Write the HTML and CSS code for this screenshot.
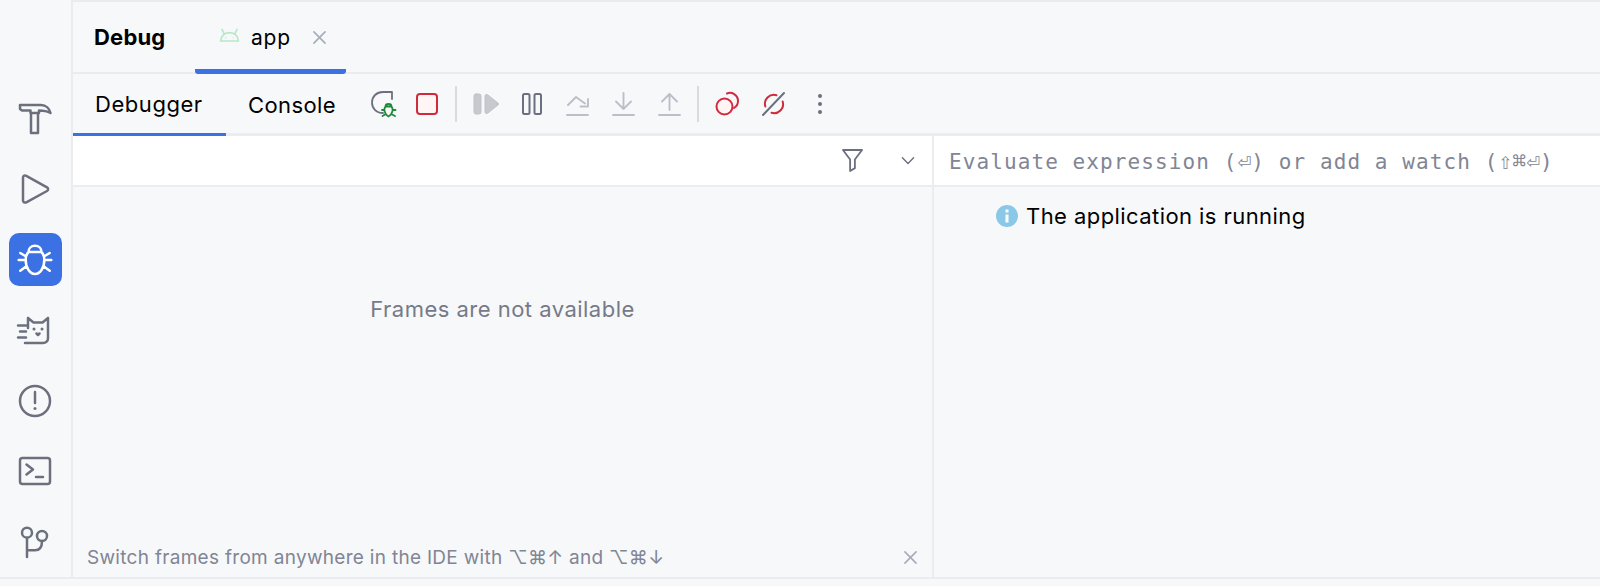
FILE: index.html
```html
<!DOCTYPE html>
<html lang="en">
<head>
<meta charset="utf-8">
<title>Debug</title>
<link rel="stylesheet" href="styles.css">
</head>
<body>
<div class="app">
  <nav class="rail">
    <span class="rail-btn"><svg viewBox="0 0 36 36" class="ico36"><path d="M3 4H24C29 4 32.500 7.500 33.500 12 30 10 27 9.500 22 9.500V12H13.500V9.500H5L3 8Z M14 12V32H21V12"/></svg></span>
    <span class="rail-btn"><svg viewBox="0 0 36 36" class="ico36"><path d="M6 6.500C6 4.800 7.800 4 9.300 4.800L30 16.300C31.500 17.300 31.500 19 30 20L9.300 31.300C7.800 32 6 31.300 6 29.500Z"/></svg></span>
    <span class="rail-btn active"><svg viewBox="0 0 36 36" class="ico36 white"><path d="M18 3.700C14 3.700 11.500 6.500 11.500 10 9.500 12 8.700 15 8.700 18 8.700 26 13 32 18 32S27.300 26 27.300 18C27.300 15 26.500 12 24.500 10 24.500 6.500 22 3.700 18 3.700Z M11.500 10H24.500 M1.700 18H8.700 M27.300 18H34.300 M3.300 11 8.700 14.300 M32.700 11 27.300 14.300 M3.300 28.700 8.700 24.700 M32.700 28.700 27.300 24.700"/></svg></span>
    <span class="rail-btn"><svg viewBox="0 0 36 36" class="ico36"><path d="M11 6V16 M31 6V26C31 29 29 31 26 31H8 M11 6 16.500 10.500H25.500L31 6 M1 13.500H9 M3 19.500H9 M1 25.500H9"/><circle cx="17" cy="17" r="1.500" class="fill"/><circle cx="25" cy="17" r="1.500" class="fill"/><path d="M19.500 21.500 21 23 22.500 21.500"/></svg></span>
    <span class="rail-btn"><svg viewBox="0 0 36 36" class="ico36"><circle cx="18" cy="18" r="15"/><path d="M18 9V20"/><circle cx="18" cy="25.500" r="1.500" class="fill"/></svg></span>
    <span class="rail-btn"><svg viewBox="0 0 36 36" class="ico36"><rect x="3" y="5" width="30" height="26" rx="2.500"/><path d="M9.500 11.500 16 16.500 9.500 21.500 M19 24H26"/></svg></span>
    <span class="rail-btn"><svg viewBox="0 0 36 36" class="ico36"><circle cx="10" cy="8.700" r="5"/><circle cx="25" cy="12" r="5"/><path d="M10 13.700V33 M10 26.300H18C22.500 26.300 25 23 25 17"/></svg></span>
  </nav>
  <main class="main">
    <header class="tabs">
      <strong class="title">Debug</strong>
      <div class="run-tab">
        <svg viewBox="0 0 22 16" class="android"><path d="M1.500 15C1.500 10 5.500 6 11 6S20.500 10 20.500 15Z M5.500 7.500 3 2.500 M16.500 7.500 19 2.500"/><circle cx="7" cy="11.500" r=".7"/><circle cx="15" cy="11.500" r=".7"/></svg>
        <span>app</span>
        <svg viewBox="0 0 14 14" class="close"><path d="M1 1 13 13M13 1 1 13"/></svg>
      </div>
    </header>
    <div class="toolbar">
      <div class="view-tab selected">Debugger</div>
      <div class="view-tab">Console</div>
      <div class="actions">
        <svg viewBox="0 0 26 26" class="tool t-rerun"><path class="grey" d="M12 22C5 22 1 17 1 11.500 1 5.500 5.500 1 12 1H21V8"/><path class="green" d="M14.500 15.500C14.500 14 16 13 17.500 13S20.500 14 20.500 15.500C22.500 17.500 22 23 17.500 25.500 13 23 12.500 17.500 14.500 15.500Z M14.500 15.500H20.500 M11 19H13.500 M21.500 19H24.500 M11.500 25 14 23.500 M24 25 21 23.500"/></svg>
        <svg viewBox="0 0 24 24" class="tool t-stop"><rect x="2" y="2" width="20" height="20" rx="3"/></svg>
        <i class="sep"></i>
        <svg viewBox="0 0 26 24" class="tool t-resume"><rect x="1" y="2" width="7" height="20" rx="2"/><path d="M12 4C12 2.500 13.500 2 14.500 2.700L25 11C25.700 11.600 25.700 12.400 25 13L14.500 21.300C13.500 22 12 21.500 12 20Z"/></svg>
        <svg viewBox="0 0 20 24" class="tool t-pause"><rect x="1" y="2" width="6.500" height="20" rx="1.500"/><rect x="12.500" y="2" width="6.500" height="20" rx="1.500"/></svg>
        <svg viewBox="0 0 22 24" class="tool t-step"><path d="M0 23H21 M1 13 9 5 18 11.500 M21 7V14.500H13.500"/></svg>
        <svg viewBox="0 0 22 24" class="tool t-step"><path d="M0 23H21 M10.500 1V17 M3 9.500 10.500 17 18 9.500"/></svg>
        <svg viewBox="0 0 22 24" class="tool t-step"><path d="M0 23H21 M10.500 18V2 M3 9.500 10.500 2 18 9.500"/></svg>
        <i class="sep"></i>
        <svg viewBox="0 0 24 24" class="tool t-red"><circle cx="9.500" cy="14.500" r="8"/><path d="M12 1.500C16.500 -.5 23 2.500 23 9 23 12 21.500 14.500 19 16"/></svg>
        <svg viewBox="0 0 24 24" class="tool t-red"><path d="M14.500 3.300A9 9 0 0 0 3.300 14.500 M9.500 20.700A9 9 0 0 0 20.700 9.500"/><path class="slash" d="M1 23 22 1"/></svg>
        <svg viewBox="0 0 6 22" class="tool t-more"><circle cx="3" cy="3" r="2"/><circle cx="3" cy="11" r="2"/><circle cx="3" cy="19" r="2"/></svg>
      </div>
    </div>
    <div class="panes">
      <section class="frames">
        <div class="frames-bar">
          <svg viewBox="0 0 22 24" class="filter"><path d="M1 1H21L13.500 11V20L8.500 23V11Z"/></svg>
          <svg viewBox="0 0 16 10" class="chev"><path d="M1 1 8 8 15 1"/></svg>
        </div>
        <div class="frames-body">
          <p class="empty">Frames are not available</p>
          <div class="hint">
            <span>Switch frames from anywhere in the IDE with ⌥⌘↑ and ⌥⌘↓</span>
            <svg viewBox="0 0 14 14" class="hint-close"><path d="M1 1 13 13M13 1 1 13"/></svg>
          </div>
        </div>
      </section>
      <section class="vars">
        <div class="eval"><span>Evaluate expression (<span class="key">⏎</span>) or add a watch (<span class="key">⇧⌘⏎</span>)</span></div>
        <div class="status">
          <svg viewBox="0 0 22 22" class="info"><circle cx="11" cy="11" r="11"/><rect x="9.500" y="9.500" width="3" height="8" /><rect x="9.500" y="4.500" width="3" height="3"/></svg>
          <span>The application is running</span>
        </div>
      </section>
    </div>
  </main>
</div>
</body>
</html>
```
FILE: styles.css
```css
* { box-sizing: border-box; }
html, body { margin: 0; height: 100%; }
body { background: #f7f8fa; font-family: Inter, "Liberation Sans", sans-serif; color: #000; overflow: hidden; }
svg { display: block; flex: none; fill: none; stroke-linecap: round; stroke-linejoin: round; overflow: visible; }

.app { display: flex; height: 586px; padding-bottom: 7px; }
.rail { width: 73px; flex: none; border-right: 2px solid #ebecf0; border-bottom: 2px solid #ebecf0; padding: 92px 1px 0 0; display: flex; flex-direction: column; align-items: center; gap: 17.500px; }
.rail-btn { width: 53px; height: 53px; display: flex; align-items: center; justify-content: center; border-radius: 10px; }
.rail-btn.active { background: #3b71e3; }
.ico36 { width: 36px; height: 36px; stroke: #6c707e; stroke-width: 2.500; }
.ico36.white { stroke: #fff; }
.ico36 .fill { fill: #6c707e; stroke: none; }

.main { flex: 1; min-width: 0; display: flex; flex-direction: column; border-top: 2px solid #ebecf0; border-bottom: 2px solid #ebecf0; }
.tabs { height: 72px; flex: none; display: flex; align-items: stretch; padding-left: 21px; border-bottom: 2px solid #ebecf0; }
.title { font-size: 22px; font-weight: 700; letter-spacing: .2px; align-self: center; width: 101px; }
.run-tab { width: 151px; display: flex; align-items: center; padding: 4px 0 0 24px; font-size: 21px; letter-spacing: .8px; margin-bottom: -2px; border-bottom: 5px solid #3b71e3; border-radius: 0 0 3px 3px; }
.run-tab span { margin-left: 11px; margin-right: 22px; }
.android { width: 21px; height: 15px; stroke: #b6e8c4; stroke-width: 1.700; margin-top: -6px; }
.android circle { fill: #b6e8c4; stroke: none; }
.close { width: 13px; height: 13px; stroke: #a8adbd; stroke-width: 1.800; }

.toolbar { height: 62px; flex: none; display: flex; align-items: stretch; border-bottom: 3px solid #ebecf0; }
.view-tab { font-size: 22px; letter-spacing: .55px; display: flex; align-items: center; margin-bottom: -3px; }
.view-tab.selected { width: 153px; padding-left: 22px; border-bottom: 3px solid #3b71e3; }
.view-tab:not(.selected) { width: 146px; padding-left: 22px; letter-spacing: .4px; }
.actions { display: flex; align-items: center; flex: 1; margin-left: -1px; }
.tool { height: 24px; }
.t-rerun { width: 26px; height: 26px; stroke-width: 1.800; }
.t-rerun .grey { stroke: #6c707e; }
.t-rerun .green { stroke: #208a3c; }
.t-stop { width: 24px; margin-left: 18px; fill: #fff5f5; stroke: #d02b3c; stroke-width: 2; }
.sep { width: 2px; height: 36px; background: #d9dbe1; margin: 0 16px; flex: none; }
.t-resume { width: 26px; fill: #c7c9cf; stroke: #bfc2c8; stroke-width: 1; }
.t-pause { width: 20px; margin-left: 23px; stroke: #6c707e; stroke-width: 2; }
.t-step { width: 22px; margin-left: 24px; stroke: #bcbfc9; stroke-width: 1.900; }
.t-pause + .t-step { margin-left: 25px; }
.t-red { width: 24px; stroke: #d02b3c; stroke-width: 2; margin-right: 23px; }
.t-red circle { fill: #fff5f5; }
.slash { stroke: #6c707e; }
.t-more { width: 6px; height: 22px; margin-left: 8px; fill: #6c707e; stroke: none; }

.panes { flex: 1; min-height: 0; display: grid; grid-template-columns: 861px 1fr; }
.frames { border-right: 2px solid #ebecf0; display: flex; flex-direction: column; min-height: 0; }
.frames-bar { height: 51px; flex: none; background: #fff; border-bottom: 2px solid #ebecf0; display: flex; align-items: center; justify-content: flex-end; }
.filter { width: 21px; height: 23px; stroke: #6c707e; stroke-width: 1.900; margin-right: 38px; }
.chev { width: 14px; height: 8px; stroke: #6c707e; stroke-width: 1.800; margin-right: 17px; }
.frames-body { flex: 1; display: flex; flex-direction: column; min-height: 0; }
.empty { margin: 0; flex: 1; color: #767a88; font-size: 22px; letter-spacing: .48px; display: flex; justify-content: center; padding-top: 109px; }
.hint { height: 44px; flex: none; display: flex; align-items: center; justify-content: space-between; padding: 4px 15px 0 14px; color: #818594; font-size: 19px; letter-spacing: .3px; }
.hint-close { width: 13px; height: 13px; stroke: #a8adbd; stroke-width: 1.800; }
.vars { display: flex; flex-direction: column; min-width: 0; }
.eval { height: 51px; flex: none; background: #fff; border-bottom: 2px solid #ebecf0; display: flex; align-items: center; padding: 2px 0 0 15px; font-family: "DejaVu Sans Mono", monospace; font-size: 21px; letter-spacing: 1.090px; color: #818594; white-space: nowrap; }
.key { font-size: 23px; line-height: 0; letter-spacing: 0; }
.status { display: flex; align-items: center; gap: 8px; padding: 16px 0 0 62px; font-size: 22px; letter-spacing: .43px; }
.info { width: 22px; height: 22px; fill: #8bc8e8; }
.info rect { fill: #fff; }
```
